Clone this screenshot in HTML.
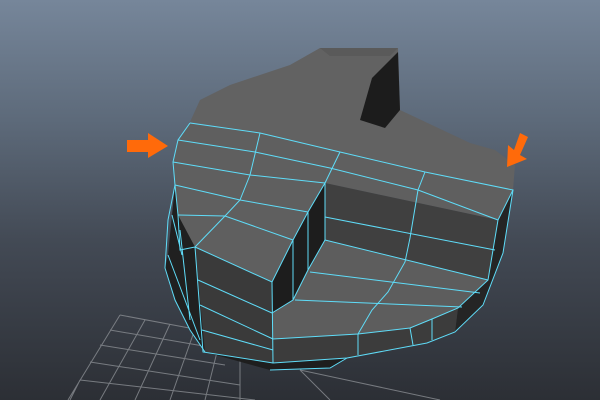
<!DOCTYPE html>
<html><head><style>
html,body{margin:0;padding:0;width:600px;height:400px;overflow:hidden}
body{background:linear-gradient(#76869a 0%,#5d6a7a 30%,#434a55 60%,#2c2f35 100%)}
svg{position:absolute;left:0;top:0}
</style></head><body>
<svg width="600" height="400" viewBox="0 0 600 400">
<g stroke="#8a8d92" stroke-width="1" fill="none" opacity="0.8">
<path d="M120 315 L200 330 M110 330 L215 348 M100 345 L225 365 M90 362 L240 385 M80 380 L255 400 M120 315 L68 400 M145 320 L100 400 M170 324 L135 400 M195 329 L170 400 M220 340 L205 400 M240 360 L240 400 M80 380 L70 400 M300 370 L440 400 M300 370 L330 400"/>
</g>
<!-- back top -->
<polygon points="190,122 200,100 230,85 290,65 320,48 398,48 400,110 470,143 495,150 515,165 513,190 425,172 340,152 260,133" fill="#626262"/>
<polygon points="320,48 398,48 390,56 330,56" fill="#5a5a5a"/>
<polygon points="360,120 372,78 398,52 400,110 385,128" fill="#1c1c1c"/>
<!-- left dark column -->
<polygon points="178,140 173,162 175,185 172,215 168,255 165,268 175,300 190,330 205,352 203,250 195,247 180,200" fill="#202020"/>
<!-- selected top -->
<polygon points="190,123 260,133 340,152 425,172 513,190 498,220 325,183 308,212 293,240 272,282 195,247 178,215 175,185 173,162 178,140" fill="#5f5f5f"/>
<!-- right raised front face -->
<polygon points="325,183 498,220 488,280 325,240" fill="#404040"/>
<!-- step dark -->
<polygon points="272,282 293,240 308,212 325,183 325,240 308,270 293,300 272,313" fill="#1d1d1d"/>
<!-- right dark side -->
<polygon points="513,190 498,220 488,280 458,308 455,332 483,305 503,253" fill="#252525"/>
<!-- lower floor -->
<polygon points="325,240 488,280 458,308 432,319 410,328 358,334 273,339 272,313 293,300 308,270" fill="#5d5d5d"/>
<!-- front bottom -->
<polygon points="273,339 358,334 410,328 432,319 458,308 455,332 427,343 347,358 273,363" fill="#3c3c3c"/>
<polygon points="195,247 272,282 273,363 205,352" fill="#3a3a3a"/>
<polygon points="205,352 273,363 347,358 330,368 270,370" fill="#1e1e1e"/>
<g stroke="#5fdcf8" stroke-width="1" fill="none">
<path d="M190,123 260,133 340,152 425,172 513,190 498,220 488,280 458,308 432,319 410,328 358,334 273,339"/>
<path d="M178,140 255,152 330,168 418,190 498,220"/>
<path d="M173,162 250,175 325,183"/>
<path d="M175,185 240,200 308,212"/>
<path d="M178,215 225,216 293,240"/>
<path d="M195,247 272,282 293,240 308,212 325,183 325,240 308,270 293,300 272,313"/>
<path d="M325,217 495,250 M325,240 488,280 M310,272 480,293 M295,300 462,307"/>
<path d="M260,133 250,175 240,200 225,216 195,247 M340,152 325,183 M425,172 418,190 410,238 405,262 388,292 372,310 358,334 M308,212 308,270 M293,240 293,300"/>
<path d="M190,123 178,140 173,162 175,185 178,215 180,250 195,247 M272,282 273,363 M195,247 203,352 273,363 347,358 427,343 455,332 483,305 503,253 513,190"/>
<path d="M198,280 272,313 M200,305 273,339 M202,330 273,350"/>
<path d="M410,328 413,345 M432,319 432,340 M358,334 358,355"/>
<path d="M175,185 168,220 165,268 175,300 190,330 205,352 M172,215 182,255 M168,255 185,300 200,340 M180,230 190,320"/>
<path d="M270,370 330,368 347,358"/>
</g>
<polygon points="127,140 148,140 148,133 168,146 148,158 148,152 127,152" fill="#ff6a0a"/>
<polygon points="520,133 528,137 520,155 527,159 507,167 508,145 514,150" fill="#ff6a0a"/>
</svg>
</body></html>
